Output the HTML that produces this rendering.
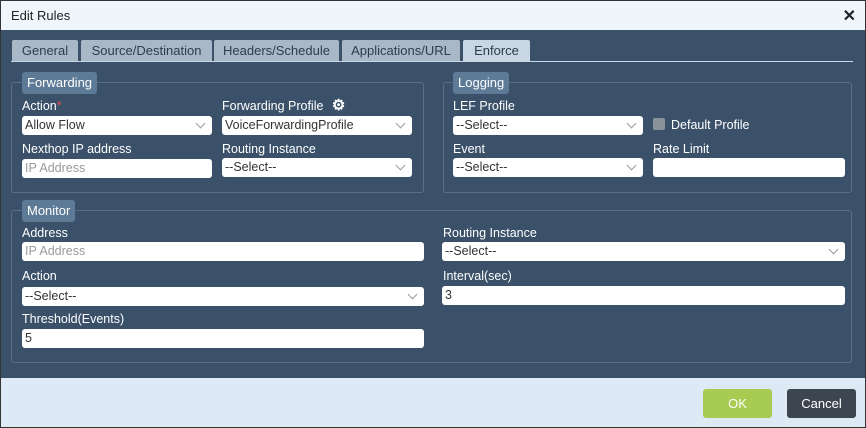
<!DOCTYPE html>
<html><head><style>
*{box-sizing:border-box;margin:0;padding:0}
body{width:866px;height:428px;font-family:"Liberation Sans",sans-serif;font-size:12px;position:relative;overflow:hidden;background:#3a5169;}
.hdr{position:absolute;left:0;top:0;width:866px;height:30px;background:#eef5fb;border:1px solid #333;border-bottom:none;}
.hdr span{position:absolute;left:10px;top:7px;font-size:13px;color:#222}
.x{position:absolute;right:9px;top:5px;font-size:16px;font-weight:bold;color:#222}
.body{position:absolute;left:0;top:30px;width:866px;height:348px;background:#3a5169;border-left:1px solid #333;border-right:1px solid #333}
.ftr{position:absolute;left:0;top:378px;width:866px;height:50px;background:#dde9f4;border:1px solid #333;border-top:none}
.tab{position:absolute;top:40px;height:21px;background:#a9b8c7;color:#2d3d4d;font-size:13px;text-align:center;line-height:21px;border-radius:2px 2px 0 0}
.tab.act{background:#c9d6e3}
.fs{position:absolute;border:1px solid #5a6f85;border-radius:3px}
.lg{position:absolute;height:22px;background:#5d7a96;color:#fff;font-size:13px;line-height:22px;padding:0 5px;border-radius:3px}
.lb{position:absolute;color:#fff;font-size:12.5px}
.in{position:absolute;height:19px;background:#fff;border-radius:3px;color:#333;font-size:12.5px;line-height:19px;padding-left:3px}
.ph{color:#999}
.sel::after{content:"";position:absolute;right:8px;top:4px;width:6px;height:6px;border-right:1px solid #999;border-bottom:1px solid #999;transform:rotate(45deg)}
.btn{position:absolute;top:389px;height:29px;width:69px;border-radius:3px;color:#fff;font-size:13px;text-align:center;line-height:29px}
</style></head><body>
<div class="hdr"><span>Edit Rules</span><div class="x">✕</div></div>
<div class="body"></div>
<div class="ftr"></div>
<div class="tab" style="left:12px;width:66px">General</div>
<div class="tab" style="left:81px;width:131px">Source/Destination</div>
<div class="tab" style="left:214px;width:125px">Headers/Schedule</div>
<div class="tab" style="left:342px;width:118px">Applications/URL</div>
<div class="tab act" style="left:463px;width:67px">Enforce</div>
<div style="position:absolute;left:11px;top:61px;width:842px;height:1px;background:#c9d6e3"></div>

<div class="fs" style="left:11px;top:82px;width:413px;height:111px"></div>
<div class="lg" style="left:22px;top:72px">Forwarding</div>
<div class="lb" style="left:22px;top:99px">Action<span style="color:#e05050">*</span></div>
<div class="in sel" style="left:22px;top:116px;width:190px">Allow Flow</div>
<div class="lb" style="left:222px;top:99px">Forwarding Profile <span style="margin-left:5px;font-size:15px;font-weight:bold;line-height:12px">⚙</span></div>
<div class="in sel" style="left:222px;top:116px;width:190px">VoiceForwardingProfile</div>
<div class="lb" style="left:22px;top:142px">Nexthop IP address</div>
<div class="in ph" style="left:22px;top:159px;width:190px">IP Address</div>
<div class="lb" style="left:222px;top:142px">Routing Instance</div>
<div class="in sel" style="left:222px;top:158px;width:190px">--Select--</div>

<div class="fs" style="left:443px;top:82px;width:409px;height:111px"></div>
<div class="lg" style="left:453px;top:72px">Logging</div>
<div class="lb" style="left:453px;top:99px">LEF Profile</div>
<div class="in sel" style="left:453px;top:116px;width:190px">--Select--</div>
<div style="position:absolute;left:653px;top:118px;width:12px;height:12px;background:#8a939c;border-radius:2px"></div>
<div class="lb" style="left:671px;top:118px">Default Profile</div>
<div class="lb" style="left:453px;top:142px">Event</div>
<div class="in sel" style="left:453px;top:158px;width:190px">--Select--</div>
<div class="lb" style="left:653px;top:142px">Rate Limit</div>
<div class="in" style="left:653px;top:158px;width:192px"></div>

<div class="fs" style="left:11px;top:210px;width:841px;height:153px"></div>
<div class="lg" style="left:22px;top:200px">Monitor</div>
<div class="lb" style="left:22px;top:226px">Address</div>
<div class="in ph" style="left:22px;top:242px;width:402px">IP Address</div>
<div class="lb" style="left:443px;top:226px">Routing Instance</div>
<div class="in sel" style="left:442px;top:242px;width:403px">--Select--</div>
<div class="lb" style="left:22px;top:269px">Action</div>
<div class="in sel" style="left:22px;top:287px;width:402px">--Select--</div>
<div class="lb" style="left:443px;top:269px">Interval(sec)</div>
<div class="in" style="left:442px;top:286px;width:403px">3</div>
<div class="lb" style="left:22px;top:312px">Threshold(Events)</div>
<div class="in" style="left:22px;top:329px;width:402px">5</div>

<div class="btn" style="left:703px;background:#a8cc52">OK</div>
<div class="btn" style="left:787px;background:#3d4550">Cancel</div>
</body></html>
